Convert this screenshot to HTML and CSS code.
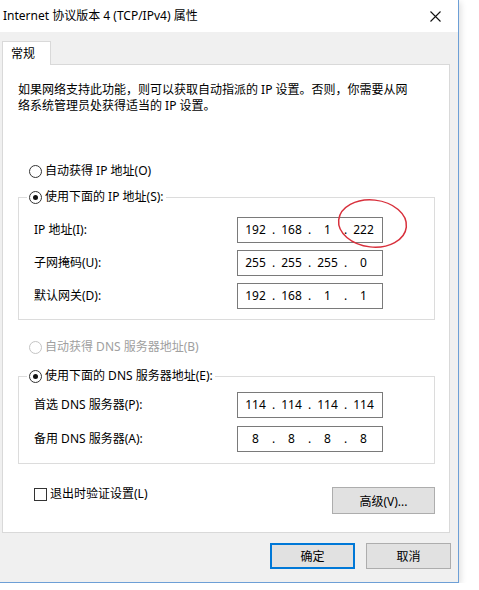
FILE: index.html
```html
<!DOCTYPE html>
<html lang="zh-CN">
	<head>
		<meta charset="UTF-8" />
		<meta name="viewport" content="width=device-width, initial-scale=1.0" />
		<title>Internet 协议版本 4 (TCP/IPv4) 属性</title>
		<link rel="stylesheet" href="styles.css">
	</head>
	<body>
		<div class="window">
			<header class="titlebar">
				<span class="title">Internet 协议版本 4 (TCP/IPv4) 属性</span>
				<button class="close" aria-label="关闭">
					<svg width="11" height="11" viewBox="0 0 11 11">
						<path d="M0.5 0.5 L10.5 10.5 M10.5 0.5 L0.5 10.5" stroke="#111" stroke-width="1.1" fill="none" />
					</svg>
				</button>
			</header>
			<div class="client">
				<div class="tabs">
					<div class="tab">常规</div>
				</div>
				<div class="panel">
					<p class="intro">如果网络支持此功能，则可以获取自动指派的 IP 设置。否则，你需要从网络系统管理员处获得适当的 IP 设置。</p>

					<label class="option first"><span class="radio"></span>自动获得 IP 地址(O)</label>
					<fieldset class="group">
						<legend><label class="option"><span class="radio on"></span>使用下面的 IP 地址(S):</label></legend>
						<div class="rows">
							<div class="row">
								<span>IP 地址(I):</span>
								<div class="ip mark">
									<span>192</span><i>.</i><span>168</span><i>.</i><span>1</span><i>.</i><span>222</span>
									<svg class="circle" width="71" height="51" viewBox="0 0 71 51">
										<ellipse cx="35.5" cy="25.5" rx="34" ry="23.5" transform="rotate(6 35.5 25.5)" stroke="#d8303c" stroke-width="1.5" fill="none" />
									</svg>
								</div>
							</div>
							<div class="row">
								<span>子网掩码(U):</span>
								<div class="ip"><span>255</span><i>.</i><span>255</span><i>.</i><span>255</span><i>.</i><span>0</span></div>
							</div>
							<div class="row">
								<span>默认网关(D):</span>
								<div class="ip"><span>192</span><i>.</i><span>168</span><i>.</i><span>1</span><i>.</i><span>1</span></div>
							</div>
						</div>
					</fieldset>

					<label class="option disabled dns-auto"><span class="radio"></span>自动获得 DNS 服务器地址(B)</label>
					<fieldset class="group dns">
						<legend><label class="option"><span class="radio on"></span>使用下面的 DNS 服务器地址(E):</label></legend>
						<div class="rows">
							<div class="row">
								<span>首选 DNS 服务器(P):</span>
								<div class="ip"><span>114</span><i>.</i><span>114</span><i>.</i><span>114</span><i>.</i><span>114</span></div>
							</div>
							<div class="row">
								<span>备用 DNS 服务器(A):</span>
								<div class="ip"><span>8</span><i>.</i><span>8</span><i>.</i><span>8</span><i>.</i><span>8</span></div>
							</div>
						</div>
					</fieldset>

					<div class="panel-footer">
						<label class="check"><span class="box"></span>退出时验证设置(L)</label>
						<button class="btn advanced">高级(V)...</button>
					</div>
				</div>
				<div class="actions">
					<button class="btn default">确定</button>
					<button class="btn">取消</button>
				</div>
			</div>
		</div>
	</body>
</html>
```

FILE: styles.css
```css
body,
html {
	margin: 0;
	background: #fff;
	font-family: "Noto Sans", "Noto Sans CJK SC", sans-serif;
	font-size: 12px;
	line-height: 16px;
	color: #000;
}
.window {
	width: 458px;
	height: 582px;
	display: flex;
	flex-direction: column;
	background: #f0f0f0;
	border-right: 1px solid #6d9fd6;
	border-bottom: 1px solid #6d9fd6;
	box-shadow: 2px 2px 6px rgba(0, 0, 0, 0.12);
}
.titlebar {
	height: 32px;
	flex: none;
	display: flex;
	align-items: center;
	justify-content: space-between;
	background: #fff;
	padding-left: 3px;
}
.close {
	width: 46px;
	height: 32px;
	border: none;
	background: none;
	padding: 0;
	display: flex;
	align-items: center;
	justify-content: center;
}
.client {
	flex: 1;
	display: flex;
	flex-direction: column;
	padding: 9px 8px 13px 2px;
	min-height: 0;
}
.tabs {
	display: flex;
	height: 23px;
}
.tab {
	position: relative;
	z-index: 1;
	width: 49px;
	height: 24px;
	box-sizing: border-box;
	padding: 4px 0 0 8px;
	background: #fff;
	border: 1px solid #d9d9d9;
	border-bottom: none;
}
.panel {
	flex: 1;
	background: #fff;
	border: 1px solid #d9d9d9;
	padding: 0 14px 0 15px;
	display: flex;
	flex-direction: column;
}
.intro {
	margin: 17px 0 0;
	width: 398px;
}
.option {
	display: flex;
	align-items: center;
	height: 16px;
	white-space: nowrap;
}
.option.first {
	margin: 49px 0 0 11px;
}
.option.dns-auto {
	margin: 19px 0 0 11px;
}
.option.disabled {
	color: #a0a0a0;
}
.radio {
	width: 11px;
	height: 11px;
	border: 1px solid #333;
	border-radius: 50%;
	background: #fff;
	margin-right: 3px;
	display: flex;
	align-items: center;
	justify-content: center;
	flex: none;
}
.radio.on::after {
	content: "";
	width: 5px;
	height: 5px;
	border-radius: 50%;
	background: #111;
}
.disabled .radio {
	border-color: #c4c4c4;
}
.group {
	margin: 10px 0 0;
	padding: 0;
	border: 1px solid #dcdcdc;
	min-width: 0;
}
.group.dns {
	margin-top: 13px;
}
.group legend {
	margin-left: 8px;
	padding: 0 2px 0 2px;
	height: 16px;
}
.rows {
	display: flex;
	flex-direction: column;
	gap: 7px;
	padding: 12px 0 10px 15px;
}
.dns .rows {
	padding: 8px 0 11px 15px;
	gap: 8px;
}
.row {
	display: flex;
	align-items: center;
	height: 26px;
}
.row > span {
	width: 203px;
}
.ip {
	width: 146px;
	height: 26px;
	box-sizing: border-box;
	border: 1px solid #7a7a7a;
	display: flex;
	align-items: center;
	padding-left: 4px;
	position: relative;
}
.ip span {
	width: 27px;
	text-align: center;
}
.ip i {
	font-style: normal;
	width: 9px;
	text-align: center;
}
.circle {
	position: absolute;
	left: 99px;
	top: -20px;
	overflow: visible;
}
.panel-footer {
	margin-top: 22px;
	display: flex;
	justify-content: space-between;
	align-items: flex-start;
	padding-left: 16px;
}
.check {
	display: flex;
	align-items: center;
	height: 16px;
}
.box {
	width: 11px;
	height: 11px;
	border: 1px solid #333;
	background: #fff;
	margin-right: 3px;
}
.btn {
	font-family: "Noto Sans", "Noto Sans CJK SC", sans-serif;
	font-size: 12px;
	color: #000;
	background: #e1e1e1;
	border: 1px solid #adadad;
	width: 85px;
	height: 26px;
	padding: 0;
}
.btn.advanced {
	width: 103px;
	height: 27px;
	margin-top: 1px;
}
.btn.default {
	border-color: #0078d7;
	box-shadow: inset 0 0 0 1px #0078d7;
}
.actions {
	display: flex;
	justify-content: flex-end;
	gap: 11px;
	margin-top: 10px;
	margin-right: -1px;
}
```
